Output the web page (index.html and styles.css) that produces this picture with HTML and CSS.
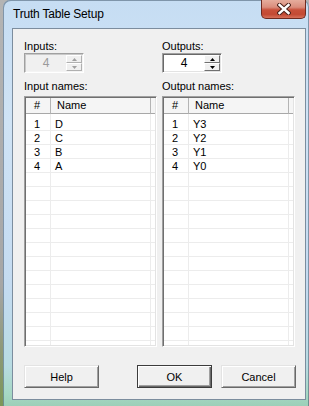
FILE: index.html
```html
<!DOCTYPE html>
<html>
<head>
<meta charset="utf-8">
<title>Truth Table Setup</title>
<link rel="stylesheet" href="styles.css">
</head>
<body>
<div class="window">
  <div class="titlebar">
    <span class="title">Truth Table Setup</span>
    <div class="close">
      <svg width="14" height="12" viewBox="0 0 14 12">
        <path d="M2.5 2 L11.5 10 M11.5 2 L2.5 10" stroke="#4a2018" stroke-width="4.4" stroke-linecap="square" fill="none"/>
        <path d="M2.5 2 L11.5 10 M11.5 2 L2.5 10" stroke="#ffffff" stroke-width="2.4" stroke-linecap="square" fill="none"/>
      </svg>
    </div>
  </div>
  <div class="client">
    <div class="panels">
      <div class="panel">
        <div class="lbl">Inputs:</div>
        <div class="spin disabled">
          <span class="spin-val">4</span>
          <div class="spin-btns">
            <span class="sb"><svg width="5" height="3" viewBox="0 0 5 3"><polygon points="2.5,0 5,3 0,3"/></svg></span>
            <span class="sb"><svg width="5" height="3" viewBox="0 0 5 3"><polygon points="0,0 5,0 2.5,3"/></svg></span>
          </div>
        </div>
        <div class="lbl names">Input names:</div>
        <div class="list">
          <div class="lhead"><span class="hc c1">#</span><span class="hc c2">Name</span><span class="hc c3"></span></div>
          <div class="lbody">
            <div class="row"><span class="c1">1</span><span class="c2">D</span></div>
            <div class="row"><span class="c1">2</span><span class="c2">C</span></div>
            <div class="row"><span class="c1">3</span><span class="c2">B</span></div>
            <div class="row"><span class="c1">4</span><span class="c2">A</span></div>
          </div>
        </div>
      </div>
      <div class="panel">
        <div class="lbl">Outputs:</div>
        <div class="spin">
          <span class="spin-val">4</span>
          <div class="spin-btns">
            <span class="sb"><svg width="5" height="3" viewBox="0 0 5 3"><polygon points="2.5,0 5,3 0,3"/></svg></span>
            <span class="sb"><svg width="5" height="3" viewBox="0 0 5 3"><polygon points="0,0 5,0 2.5,3"/></svg></span>
          </div>
        </div>
        <div class="lbl names">Output names:</div>
        <div class="list">
          <div class="lhead"><span class="hc c1">#</span><span class="hc c2">Name</span><span class="hc c3"></span></div>
          <div class="lbody">
            <div class="row"><span class="c1">1</span><span class="c2">Y3</span></div>
            <div class="row"><span class="c1">2</span><span class="c2">Y2</span></div>
            <div class="row"><span class="c1">3</span><span class="c2">Y1</span></div>
            <div class="row"><span class="c1">4</span><span class="c2">Y0</span></div>
          </div>
        </div>
      </div>
    </div>
    <div class="buttons">
      <button class="btn">Help</button>
      <span class="spacer"></span>
      <button class="btn default">OK</button>
      <button class="btn">Cancel</button>
    </div>
  </div>
</div>
</body>
</html>
```
FILE: styles.css
```css
html, body {
  margin: 0;
  padding: 0;
}
body {
  width: 309px;
  height: 406px;
  overflow: hidden;
  background: linear-gradient(to bottom, #b4b4b4 0%, #a6a6a6 70%, #8e9878 86%, #7c9658 100%);
  font-family: "Liberation Sans", Arial, sans-serif;
  font-size: 11px;
  color: #000;
}
.window {
  box-sizing: border-box;
  margin-left: 3px;
  width: 306px;
  height: 406px;
  padding: 0 3px 6px 9px;
  border-radius: 7px 7px 0 0;
  background: linear-gradient(to bottom, #c6ddf3 0%, #cfe3f5 30%, #c4dbf1 70%, #b8dbe2 90%, #a6d8c4 97%, #9ccfb8 100%);
  box-shadow: inset 1px 1px rgba(70, 90, 110, 0.55), inset -1px 0 rgba(70, 90, 110, 0.55);
  display: flex;
  flex-direction: column;
}
.titlebar {
  height: 28px;
  display: flex;
  align-items: flex-start;
  flex: none;
}
.title {
  margin: 7px 0 0 1px;
  font-size: 12px;
  line-height: 14px;
  letter-spacing: -0.2px;
  color: #000;
}
.close {
  margin-left: auto;
  box-sizing: border-box;
  width: 45px;
  height: 19px;
  border: 1px solid #6e2a20;
  border-top: none;
  border-radius: 0 0 5px 5px;
  background: linear-gradient(to bottom, #e6ad9d 0%, #da8d7c 40%, #c8503a 55%, #c34a34 80%, #d6705a 100%);
  display: flex;
  align-items: center;
  justify-content: center;
  padding-bottom: 1px;
}
.client {
  box-sizing: border-box;
  height: 372px;
  flex: none;
  border: 1px solid #7c8d9e;
  background: #f0f0f0;
  padding: 11px 9px 0 11px;
  display: flex;
  flex-direction: column;
}
.panels {
  display: flex;
  gap: 5px;
}
.panel {
  width: 133px;
  display: flex;
  flex-direction: column;
}
.lbl {
  height: 13px;
  line-height: 13px;
}
.names {
  margin-top: 7px;
}
.spin {
  box-sizing: border-box;
  width: 60px;
  height: 20px;
  display: flex;
  border: 1px solid;
  border-color: #a0a0a0 #fff #fff #a0a0a0;
  box-shadow: inset 1px 1px #696969, inset -1px -1px #e3e3e3;
  background: #fff;
  padding: 1px;
}
.spin.disabled {
  background: #f0f0f0;
  box-shadow: inset 1px 1px #c8c8c8, inset -1px -1px #f4f4f4;
}
.spin-val {
  flex: 1;
  text-align: center;
  line-height: 16px;
  font-size: 12px;
}
.spin.disabled .spin-val {
  color: #9a9a9a;
}
.spin-btns {
  width: 16px;
  display: flex;
  flex-direction: column;
}
.sb {
  flex: 1;
  box-sizing: border-box;
  display: flex;
  align-items: center;
  justify-content: center;
  background: #f0f0f0;
  border: 1px solid;
  border-color: #fff #707070 #707070 #fff;
}
.sb svg {
  fill: #000;
}
.spin.disabled .sb {
  border-color: #fff #b0b0b0 #b0b0b0 #fff;
}
.spin.disabled .sb svg {
  fill: #a0a0a0;
}
.list {
  box-sizing: border-box;
  margin-top: 3px;
  height: 251px;
  border: 1px solid;
  border-color: #a0a0a0 #fff #fff #a0a0a0;
  box-shadow: inset 1px 1px #6f6f6f, inset -1px -1px #e3e3e3;
  background: #fff;
  padding: 1px;
  display: flex;
  flex-direction: column;
}
.lhead {
  display: grid;
  grid-template-columns: 25px 100px 1fr;
  height: 16px;
  background: #f5f5f5;
  flex: none;
}
.hc {
  border-bottom: 1px solid #a8a8a8;
  line-height: 15px;
}
.hc.c1, .hc.c2 {
  border-right: 1px solid #b4b4b4;
}
.hc.c1 {
  padding-left: 8px;
}
.hc.c2 {
  padding-left: 6px;
}
.lbody {
  flex: 1;
  padding-top: 3px;
  background:
    linear-gradient(#ececec, #ececec) 24px 0 / 1px 100% no-repeat,
    linear-gradient(#ececec, #ececec) 124px 0 / 1px 100% no-repeat,
    repeating-linear-gradient(to bottom, transparent 0 13px, #ececec 13px 14px) 0 3px / 100% 100% no-repeat,
    #fff;
}
.row {
  display: grid;
  grid-template-columns: 25px 100px;
  height: 14px;
  line-height: 14px;
}
.row .c1 {
  padding-left: 8px;
}
.row .c2 {
  padding-left: 4px;
}
.buttons {
  display: flex;
  gap: 9px;
  margin-top: 18px;
}
.spacer {
  flex: 1;
}
.btn {
  box-sizing: border-box;
  width: 75px;
  height: 23px;
  padding: 0;
  margin: 0;
  font-family: "Liberation Sans", Arial, sans-serif;
  font-size: 11px;
  color: #000;
  background: #f0f0f0;
  border: 1px solid;
  border-color: #e3e3e3 #696969 #696969 #e3e3e3;
  box-shadow: inset 1px 1px #fff, inset -1px -1px #a0a0a0;
}
.btn.default {
  border-color: #3c3c3c;
  box-shadow: inset 1px 1px #fff, inset -1px -1px #696969, inset -2px -2px #a0a0a0;
}
```
